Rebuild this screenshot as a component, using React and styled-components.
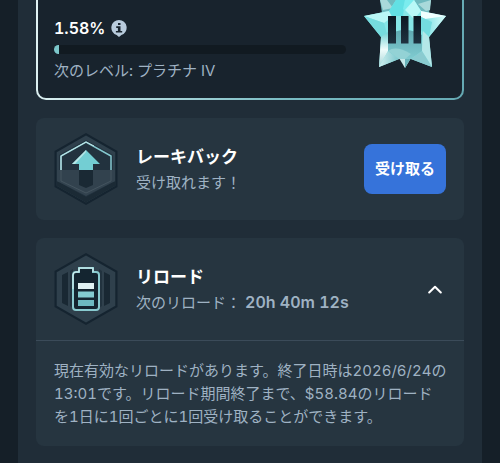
import React, { useState } from 'react'
import styled, { createGlobalStyle } from 'styled-components'

const InfoIcon = () => (
    <svg width="16" height="17" viewBox="0 0 16 17" aria-hidden="true">
        <path d="M8 0a7.7 7.7 0 0 1 2.4 15L8 17l-2.4-2A7.7 7.7 0 0 1 8 0z" fill="#b8cbdc" />
        <path d="M7 2.9h2.5v2.2H7zM5.2 6.3h4.3v4.6h1.7v1.7H4.9v-1.7h2V8H5.2z" fill="#18242e" />
    </svg>
)

const StarBadge = () => (
    <svg width="82" height="69" viewBox="0 0 82 69" role="img" aria-label="III">
        <defs>
            <linearGradient id="lower" x1="0" y1="0" x2="0" y2="1">
                <stop offset="0" stopColor="#5fa9b2" />
                <stop offset="1" stopColor="#80cbd0" />
            </linearGradient>
            <linearGradient id="bars" x1="0" y1="0" x2="0" y2="1">
                <stop offset="0" stopColor="#0c1823" />
                <stop offset="1" stopColor="#1f3240" />
            </linearGradient>
            <linearGradient id="rightArm" x1="0" y1="0" x2="1" y2="0">
                <stop offset="0" stopColor="#6fdde0" />
                <stop offset="1" stopColor="#d9fbfa" />
            </linearGradient>
            <linearGradient id="leftLeg" x1="0" y1="0" x2="0" y2="1">
                <stop offset="0" stopColor="#72d3d6" />
                <stop offset="0.5" stopColor="#effcfb" />
                <stop offset="1" stopColor="#a5d5d7" />
            </linearGradient>
            <linearGradient id="foot" x1="0" y1="0" x2="1" y2="0">
                <stop offset="0" stopColor="#d3efef" />
                <stop offset="1" stopColor="#79c6cc" />
            </linearGradient>
        </defs>
        <path d="M16 0h51l-2 13H18z" fill="#6fb9be" />
        <path d="M16 0h7l6 8-10 2zM67 0l-13 4 8 7 4-1z" fill="#a9d9da" />
        <path d="M35 58l6 10 6-10z" fill="#c7e9e9" />
        <path d="M41 58v10l6-10z" fill="#69b3ba" />
        <path d="M32 0h18l7 11 25 5-17 21 3 30-21-8H35l-20 8 2-30L0 16l25-5z" fill="#86e6e7" />
        <path d="M0 16l25-5 3 6-8 6z" fill="#baf7f6" />
        <path d="M0 16l20 7 4 15-7-1z" fill="#76dcdf" />
        <path d="M25 11L32 0h9l-2 16H28z" fill="#62e0e4" />
        <path d="M41 0h9l7 11-10 5-8-7z" fill="#7becee" />
        <path d="M50 0l7 11-7 8-9-9z" fill="#b9f8f7" />
        <path d="M57 11l25 5-14 6-11-5z" fill="#f0ffff" />
        <path d="M82 16L65 37l-8-7 4-11z" fill="url(#rightArm)" />
        <path d="M57 17l11 5-3 15-8-7z" fill="#74dce0" />
        <path d="M17 37l7-5v19L15 67z" fill="url(#leftLeg)" />
        <path d="M15 67l9-16 11 8z" fill="url(#foot)" />
        <path d="M65 37l-6-6-1 20 10 16z" fill="#b4e7e8" />
        <path d="M68 67L58 51l-11 8z" fill="#8acbd0" />
        <path d="M24 35q17-10 34 0v16l-11 8H35l-11-8z" fill="url(#lower)" />
        <path d="M24 51q8-6 23 3l-6 5h-6z" fill="#93d2d5" />
        <path d="M24 16h8v27.500h-8zM37 16h7.500v27.500H37zM49.500 16h7.500v27.500h-7.500z" fill="url(#bars)" />
    </svg>
)

const HexBase = ({ children }) => (
    <svg width="64" height="72" viewBox="0 0 64 72" aria-hidden="true">
        <path d="M32 0l31.500 18v36L32 72 .5 54V18z" fill="#152430" />
        <path d="M32 2.500L61.300 19.200v33.600L32 69.500 2.700 52.800V19.200z" fill="#2f404c" />
        {children}
    </svg>
)

const RakebackIcon = () => (
    <HexBase>
        <path d="M5 22L32 7l27 15v28L32 65 5 50z" fill="#22323e" />
        <path d="M2.700 48L32 64l29.300-16v4.800L32 69.500 2.700 52.800z" fill="#1b2a35" />
        <path d="M7 37V23L32 9l25 14v14" fill="none" stroke="#85c8cf" strokeWidth="1.500" />
        <path d="M7 37V23L32 9l8 4" fill="none" stroke="#c1e4e6" strokeWidth="1" />
        <path d="M3 37h58v11L32 63 3 48z" fill="#32424e" />
        <path d="M7 37v11l25 12 25-12V37" fill="none" stroke="#44545f" strokeWidth="1" />
        <path d="M25 37h14v15l-7 3-7-3z" fill="#1a2934" />
        <path d="M32 17l14 14h-7v6H25v-6h-7z" fill="#73ced3" />
        <path d="M32 17L18 31h3l11-12z" fill="#b6e5e6" />
    </HexBase>
)

const ReloadIcon = () => (
    <HexBase>
        <path d="M8 22l6-3v34l-6-3zM56 22l-6-3v34l6-3z" fill="#192833" />
        <path d="M16 18l3-2v39l-3-2zM48 18l-3-2v39l3-2z" fill="#22333f" />
        <path d="M25 15h14v4h3q3 0 3 3v32q0 3-3 3H22q-3 0-3-3V22q0-3 3-3h3z" fill="#142530" stroke="#89cbd0" strokeWidth="2" />
        <path d="M19 36V22q0-3 3-3h3v-4h14v4" fill="none" stroke="#d7eeef" strokeWidth="1" />
        <path d="M24 30h16v6H24z" fill="#e0f2f3" />
        <path d="M24 38.500h16v6H24z" fill="#83cbd0" />
        <path d="M24 47h16v6H24z" fill="#6dbac1" />
    </HexBase>
)

const App = () => {
    const [open, setOpen] = useState(true)
    const progress = 1.58

    return (
        <>
            <GlobalStyle />
            <Panel>
                <LevelCard>
                    <LevelInfo>
                        <Percent>{progress}% <InfoIcon /></Percent>
                        <Track><Fill style={{ width: `${progress}%` }} /></Track>
                        <Muted>次のレベル: プラチナ IV</Muted>
                    </LevelInfo>
                    <StarBadge />
                </LevelCard>

                <Card>
                    <Row>
                        <RakebackIcon />
                        <Labels>
                            <Title>レーキバック</Title>
                            <Muted>受け取れます！</Muted>
                        </Labels>
                        <ClaimButton type="button">受け取る</ClaimButton>
                    </Row>
                </Card>

                <Card>
                    <Row>
                        <ReloadIcon />
                        <Labels>
                            <Title>リロード</Title>
                            <Muted>次のリロード： <Timer>20h 40m 12s</Timer></Muted>
                        </Labels>
                        <Toggle type="button" aria-label="リロード" aria-expanded={open} onClick={() => setOpen(!open)}>
                            <Chevron $open={open} width="14" height="9" viewBox="0 0 14 9" aria-hidden="true">
                                <path d="M1.200 7.500L7 1.700l5.800 5.800" fill="none" stroke="currentColor" strokeWidth="2" strokeLinecap="round" strokeLinejoin="round" />
                            </Chevron>
                        </Toggle>
                    </Row>
                    {open && (
                        <Details>
                            現在有効なリロードがあります。終了日時は2026/6/24の13:01です。リロード期間終了まで、$58.84のリロード<NoBreak>を1日に1回</NoBreak>ごとに1回受け取ることができます。
                        </Details>
                    )}
                </Card>
            </Panel>
        </>
    )
}

export default App


// styling
const GlobalStyle = createGlobalStyle`
    * {
        box-sizing: border-box;
    }

    body {
        margin: 0;
        background: #151f28;
        color: #fff;
        font-family: Inter, "Noto Sans CJK JP", sans-serif;
        font-size: 15px;
        font-variant-numeric: tabular-nums;
        line-height: 23px;
        text-spacing-trim: space-all;
    }

    svg {
        display: block;
        flex-shrink: 0;
    }
`

const Panel = styled.main`
    display: flex;
    flex-direction: column;
    gap: 18px;
    min-height: 100vh;
    margin: 0 18px;
    padding: 0 18px 16px;
    background: #202d38;
`

const LevelCard = styled.section`
    display: flex;
    justify-content: space-between;
    gap: 18px;
    padding: 0 16px 16px;
    border: 2px solid transparent;
    border-top: none;
    border-radius: 0 0 10px 10px;
    background:
        linear-gradient(#18232d, #18232d) padding-box,
        linear-gradient(100deg, #e2f3f4, #79bcc3 60%, #65a9b3) border-box;
`

const LevelInfo = styled.div`
    flex: 1;
    display: flex;
    flex-direction: column;
    padding-top: 17px;
`

const Percent = styled.div`
    display: flex;
    align-items: center;
    gap: 6px;
    font-size: 16px;
    font-weight: 600;
`

const Track = styled.div`
    height: 9px;
    margin: 5px 0;
    border-radius: 5px;
    background: #111a21;
    overflow: hidden;
`

const Fill = styled.div`
    height: 100%;
    background: #7cc7cb;
`

const Card = styled.section`
    border-radius: 8px;
    background: #263540;
`

const Row = styled.div`
    display: flex;
    align-items: center;
    gap: 18px;
    min-height: 102px;
    padding: 0 18px;
`

const Labels = styled.div`
    flex: 1;
    display: flex;
    flex-direction: column;
    gap: 2px;
    padding-top: 2px;
`

const Title = styled.h2`
    margin: 0;
    font-size: 17px;
    font-weight: 700;
`

const Muted = styled.span`
    color: #9fb2c3;
`

const Timer = styled.span`
    font-size: 16px;
    font-weight: 600;
`

const NoBreak = styled.span`
    white-space: nowrap;
`

const ClaimButton = styled.button`
    padding: 0 11px 2px;
    height: 50px;
    border: none;
    border-radius: 8px;
    background: #3673da;
    color: #fff;
    font: inherit;
    font-weight: 700;
    cursor: pointer;
`

const Toggle = styled.button`
    padding: 4px;
    border: none;
    background: transparent;
    color: #fff;
    cursor: pointer;
`

const Chevron = styled.svg`
    transform: ${props => props.$open ? 'none' : 'rotate(180deg)'};
`

const Details = styled.p`
    margin: 0;
    padding: 18px 16px 18px 18px;
    border-top: 1px solid #3b4b59;
    color: #9fb2c3;
`
